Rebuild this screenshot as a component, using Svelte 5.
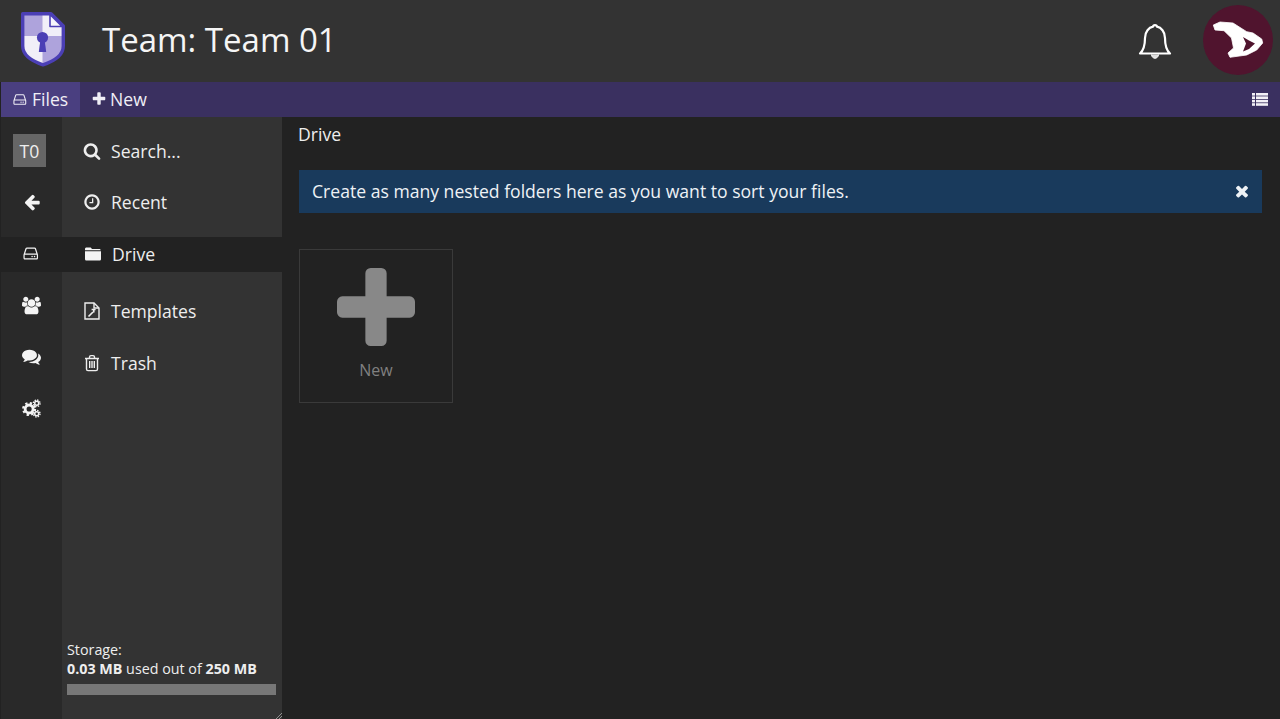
<script>
    // FontAwesome-style glyph paths on a 1792 grid
    const icons = {
        search: "M1216 832q0-185-131.5-316.5t-316.5-131.5-316.5 131.5-131.5 316.5 131.5 316.5 316.5 131.5 316.5-131.5 131.5-316.5zm512 832q0 52-38 90t-90 38q-54 0-90-38l-343-342q-179 124-399 124-143 0-273.5-55.5t-225-150-150-225-55.5-273.5 55.5-273.5 150-225 225-150 273.5-55.5 273.5 55.5 225 150 150 225 55.5 273.5q0 220-124 399l343 343q37 37 37 90z",
        clock: "M1024 544v448q0 14-9 23t-23 9h-320q-14 0-23-9t-9-23v-64q0-14 9-23t23-9h224v-352q0-14 9-23t23-9h64q14 0 23 9t9 23zm416 352q0-148-73-273t-198-198-273-73-273 73-198 198-73 273 73 273 198 198 273 73 273-73 198-198 73-273zm224 0q0 209-103 385.5t-279.5 279.5-385.5 103-385.5-103-279.5-279.5-103-385.5 103-385.5 279.5-279.5 385.5-103 385.5 103 279.5 279.5 103 385.5z",
        hdd: "M1040 1216q0 33-23.5 56.5t-56.5 23.5-56.5-23.5-23.5-56.5 23.5-56.5 56.5-23.5 56.5 23.5 23.5 56.5zm256 0q0 33-23.5 56.5t-56.5 23.5-56.5-23.5-23.5-56.5 23.5-56.5 56.5-23.5 56.5 23.5 23.5 56.5zm160 160v-320q0-13-9.5-22.5t-22.5-9.5h-1216q-13 0-22.5 9.5t-9.5 22.5v320q0 13 9.5 22.5t22.5 9.5h1216q13 0 22.5-9.5t9.5-22.5zm-1230-480h1180l-157-482q-4-13-16-21.5t-26-8.5h-782q-14 0-26 8.5t-16 21.5zm1358 160v320q0 66-47 113t-113 47h-1216q-66 0-113-47t-47-113v-320q0-25 16-75l197-606q17-53 63-86t101-33h782q55 0 101 33t63 86l197 606q16 50 16 75z",
        plus: "M1600 736v192q0 40-28 68t-68 28h-416v416q0 40-28 68t-68 28h-192q-40 0-68-28t-28-68v-416h-416q-40 0-68-28t-28-68v-192q0-40 28-68t68-28h416v-416q0-40 28-68t68-28h192q40 0 68 28t28 68v416h416q40 0 68 28t28 68z",
        times: "M1490 1322q0 40-28 68l-136 136q-28 28-68 28t-68-28l-294-294-294 294q-28 28-68 28t-68-28l-136-136q-28-28-28-68t28-68l294-294-294-294q-28-28-28-68t28-68l136-136q28-28 68-28t68 28l294 294 294-294q28-28 68-28t68 28l136 136q28 28 28 68t-28 68l-294 294 294 294q28 28 28 68z",
        arrow: "M1664 896v128q0 53-32.5 90.5t-84.5 37.5h-704l293 294q38 36 38 90t-38 90l-75 76q-37 37-90 37-52 0-91-37l-651-652q-37-37-37-90 0-52 37-91l651-650q38-38 91-38 52 0 90 38l75 74q38 38 38 91t-38 91l-293 293h704q52 0 84.5 37.5t32.5 90.5z",
        users: "M593 896q-162 5-265 128h-134q-82 0-138-40.5t-56-118.5q0-353 124-353 6 0 43.5 21t97.5 42.5 119 21.5q67 0 133-23-5 37-5 66 0 139 81 256zm1071 637q0 120-73 189.5t-194 69.5h-874q-121 0-194-69.5t-73-189.5q0-53 3.5-103.5t14-109 26.5-108.5 43-97.5 62-81 85.5-53.5 111.5-20q10 0 43 21.5t73 48 107 48 135 21.5 135-21.5 107-48 73-48 43-21.5q61 0 111.5 20t85.5 53.5 62 81 43 97.5 26.5 108.5 14 109 3.5 103.5zm-1024-1277q0 106-75 181t-181 75-181-75-75-181 75-181 181-75 181 75 75 181zm704 384q0 159-112.5 271.5t-271.5 112.5-271.5-112.5-112.5-271.5 112.5-271.5 271.5-112.5 271.5 112.5 112.5 271.5zm576 225q0 78-56 118.5t-138 40.5h-134q-103-123-265-128 81-117 81-256 0-29-5-66 66 23 133 23 59 0 119-21.5t97.5-42.5 43.5-21q124 0 124 353zm-128-609q0 106-75 181t-181 75-181-75-75-181 75-181 181-75 181 75 75 181z",
        comments: "M1408 768q0 139-94 257t-256.5 186.5-353.5 68.5q-86 0-176-16-124 88-278 128-36 9-86 16h-3q-11 0-20.5-8t-11.5-21q-1-3-1-6.5t.5-6.5 2-6l2.5-5 3.5-5.5 4-5 4.5-5 4-4.5q5-6 23-25t26-29.5 22.5-29 25-38.5 20.5-44q-124-72-195-177t-71-224q0-139 94-257t256.5-186.5 353.5-68.5 353.5 68.5 256.5 186.5 94 257zm384 256q0 120-71 224.5t-195 176.5q10 24 20.5 44t25 38.5 22.5 29 26 29.5 23 25q1 1 4 4.5t4.5 5 4 5 3.5 5.5l2.5 5 2 6 .5 6.5-1 6.5q-3 14-13 22t-22 7q-50-7-86-16-154-40-278-128-90 16-176 16-271 0-472-132 58 4 88 4 161 0 309-45t264-129q125-92 192-212t67-254q0-77-23-152 129 71 204 178t75 230z"
    }

    const rail = [
        { icon: "arrow", size: 18 },
        { icon: "hdd", size: 17, active: true },
        { icon: "users", size: 19 },
        { icon: "comments", size: 19 },
        { icon: "cogs" }
    ]
</script>

{#snippet fa(name, size)}
    <svg class="fa" width={size} height={size} viewBox={name === "users" ? "0 0 1920 1792" : "0 0 1792 1792"} fill="currentColor"><path d={icons[name]} /></svg>
{/snippet}

<div class="app">
    <header class="top">
        <svg class="logo" width="46" height="56" viewBox="0 0 46 56">
            <path d="M2.7 2.7H31L43.3 15V35C43.3 45 33 50.5 23 53.8C13 50.5 2.7 45 2.7 35Z" fill="#f1eff8" />
            <path d="M3 3H22.5V25H3Z" fill="#aea3dc" />
            <path d="M22.5 25H43V36C43 44 33 49 22.5 53Z" fill="#aea3dc" />
            <path d="M2.7 2.7H31L43.3 15V35C43.3 45 33 50.5 23 53.8C13 50.5 2.7 45 2.7 35Z" fill="none" stroke="#4b3fb5" stroke-width="3.4" stroke-linejoin="round" />
            <path d="M30 3.5L42 15.5H30Z" fill="#f6f5fb" stroke="#4b3fb5" stroke-width="1.6" stroke-linejoin="round" />
            <circle cx="22.5" cy="26.5" r="5.6" fill="#4b3fb5" />
            <path d="M20.5 28H24.5L26.2 41H18.8Z" fill="#4b3fb5" />
        </svg>
        <h1>Team: Team 01</h1>
        <svg class="bell" width="34" height="38" viewBox="0 0 34 38" fill="none" stroke="#fff" stroke-width="2.2" stroke-linejoin="round">
            <path d="M2 30.5C6 27 7 22 7 15C7 8.5 11 4.5 15 3.7C15.2 1.5 18.8 1.5 19 3.7C23 4.5 27 8.5 27 15C27 22 28 27 32 30.5Z" />
            <path d="M13.5 31.5C13.8 36.5 20.2 36.5 20.5 31.5" fill="#ddd" stroke-width="1" />
        </svg>
        <div class="avatar">
            <svg width="70" height="70" viewBox="0 0 70 70">
                <path d="M10.3 20L17 17L30 18L43.7 26.7L50 28L58.7 34L59.7 38L53.7 45L43.7 50L27 52.3L25 48L30.5 43L28.5 33L21 25.7L12 25Z" fill="#fff" stroke="#fff" stroke-width="0.8" stroke-linejoin="round" />
                <path d="M40 32L46 35.5L52 38.5L46 44L40 46.5L43 38.5Z" fill="#50142e" />
            </svg>
        </div>
    </header>

    <nav class="toolbar">
        <div class="tab current">{@render fa("hdd", 15)}<span>Files</span></div>
        <div class="tab">{@render fa("plus", 16)}<span>New</span></div>
        <svg class="listview" width="16" height="13" viewBox="0 0 16 13" fill="#f2f0f6">
            <rect x="0" y="0" width="3" height="2.6" /><rect x="4" y="0" width="12" height="2.6" />
            <rect x="0" y="3.4" width="3" height="2.6" /><rect x="4" y="3.4" width="12" height="2.6" />
            <rect x="0" y="6.8" width="3" height="2.6" /><rect x="4" y="6.8" width="12" height="2.6" />
            <rect x="0" y="10.2" width="3" height="2.6" /><rect x="4" y="10.2" width="12" height="2.6" />
        </svg>
    </nav>

    <div class="body">
        <aside class="sidebar">
            <div class="rail">
                <div class="team"><span>T0</span></div>
                {#each rail as item}
                    <div class="railitem" class:active={item.active}>
                        {#if item.icon === "cogs"}
                            <svg width="19" height="19" viewBox="0 0 20 20" fill="none" stroke="#f4f4f4">
                                <circle cx="7.5" cy="10.5" r="4.2" stroke-width="3" />
                                <circle cx="7.5" cy="10.5" r="6.2" stroke-width="2.4" stroke-dasharray="2.4 2.47" />
                                <circle cx="15.5" cy="4.5" r="2.1" stroke-width="1.6" />
                                <circle cx="15.5" cy="4.5" r="3.5" stroke-width="1.4" stroke-dasharray="1.5 1.25" />
                                <circle cx="15.5" cy="15.5" r="2.1" stroke-width="1.6" />
                                <circle cx="15.5" cy="15.5" r="3.5" stroke-width="1.4" stroke-dasharray="1.5 1.25" />
                            </svg>
                        {:else}
                            {@render fa(item.icon, item.size)}
                        {/if}
                    </div>
                {/each}
            </div>
            <div class="tree">
                <div class="row first">{@render fa("search", 18)}<span>Search...</span></div>
                <div class="row">{@render fa("clock", 18)}<span>Recent</span></div>
                <div class="row drive">
                    <svg class="fa" width="18" height="14" viewBox="0 0 18 14" fill="#f4f4f4">
                        <path d="M1 3.2V2C1 1 1.7.5 2.5.5H6C7 .5 7.5 1 7.8 2H15C16 2 16.6 2.4 16.8 3.2Z" />
                        <path d="M1 4.2H17V12C17 13 16.3 13.6 15.4 13.6H2.6C1.7 13.6 1 13 1 12Z" />
                    </svg>
                    <span>Drive</span>
                </div>
                <div class="row templates">
                    <svg class="fa" width="18" height="18" viewBox="0 0 18 18" fill="none" stroke="#eee" stroke-width="1.4">
                        <path d="M2 1H11L16 6V17H2Z" />
                        <path d="M11 1V6H16" />
                        <path d="M5.5 14.5L10 10M8.6 7.5H12.6M10.8 7.5V10.5" stroke-width="1.6" />
                    </svg>
                    <span>Templates</span>
                </div>
                <div class="row">
                    <svg class="fa" width="18" height="18" viewBox="0 0 18 18" fill="none" stroke="#eee" stroke-width="1.4">
                        <path d="M2 4.5H16M6.5 4.5V3C6.5 2 7 1.6 8 1.6H10C11 1.6 11.5 2 11.5 3V4.5" />
                        <path d="M3.5 4.5V15C3.5 16 4.1 16.6 5 16.6H13C13.9 16.6 14.5 16 14.5 15V4.5" />
                        <path d="M6.7 7V14M9 7V14M11.3 7V14" />
                    </svg>
                    <span>Trash</span>
                </div>
                <div class="storage">
                    <div>Storage:</div>
                    <div><b>0.03 MB</b> used out of <b>250 MB</b></div>
                    <div class="bar"></div>
                </div>
                <svg class="grip" width="6" height="6" viewBox="0 0 6 6" stroke="#aaa" stroke-width="0.8"><path d="M0 6L6 0M3 6L6 3" /></svg>
            </div>
        </aside>

        <main class="content">
            <div class="path">Drive</div>
            <div class="info">
                <span>Create as many nested folders here as you want to sort your files.</span>
                {@render fa("times", 18)}
            </div>
            <div class="grid">
                <div class="tile">
                    <svg width="78" height="78" viewBox="192 128 1408 1408" fill="#888" class="bigplus"><path d={icons.plus} /></svg>
                    <span>New</span>
                </div>
            </div>
        </main>
    </div>
</div>

<style>
    :global(body) {
        background: #222;
    }
    .app {
        display: flex;
        flex-direction: column;
        height: 719px;
        overflow: hidden;
        font-family: "Open Sans", sans-serif;
        color: #eee;
        background: #222;
    }
    .fa {
        display: block;
        flex: none;
    }
    .top {
        display: flex;
        align-items: center;
        height: 82px;
        flex: none;
        background: #333;
        padding: 0 7px 2px 20px;
        box-sizing: border-box;
    }
    .logo {
        flex: none;
        margin-top: -2px;
    }
    h1 {
        margin: -2px 0 0 36px;
        font-size: 33px;
        font-weight: 400;
        color: #f5f5f5;
        flex: 1;
    }
    .bell {
        margin-right: 31px;
        margin-top: 3px;
    }
    .avatar {
        width: 70px;
        height: 70px;
        border-radius: 50%;
        background: #50142e;
        overflow: hidden;
    }
    .avatar svg {
        display: block;
    }
    .toolbar {
        display: flex;
        align-items: center;
        height: 35px;
        flex: none;
        margin-left: 1px;
        background: #3a3060;
        padding-right: 12px;
    }
    .tab {
        display: flex;
        align-items: center;
        gap: 4px;
        height: 100%;
        padding: 0 11px 1px;
        box-sizing: border-box;
        font-size: 17.6px;
        color: #f0eef6;
    }
    .tab.current {
        background: #4a3f80;
        width: 79px;
        padding: 0 11px 1px 12px;
    }
    .tab:not(.current) {
        gap: 3px;
    }
    .listview {
        margin-left: auto;
    }
    .body {
        display: flex;
        flex: 1;
        min-height: 0;
    }
    .sidebar {
        display: flex;
        flex: none;
        margin-left: 1px;
        width: 281px;
    }
    .rail {
        width: 61px;
        flex: none;
        background: #292929;
        padding-top: 17px;
        box-sizing: border-box;
        display: flex;
        flex-direction: column;
        color: #f4f4f4;
    }
    .team {
        width: 33px;
        height: 33px;
        margin: 0 0 18px 12px;
        background: #666;
        color: #eee;
        font-size: 17.6px;
        display: flex;
        align-items: center;
        justify-content: center;
    }
    .railitem {
        height: 35px;
        margin-bottom: 16.5px;
        padding-bottom: 1px;
        box-sizing: border-box;
        display: flex;
        align-items: center;
        justify-content: center;
    }
    .railitem.active {
        background: #222;
    }
    .tree {
        flex: 1;
        background: #333;
        display: flex;
        flex-direction: column;
        position: relative;
    }
    .row {
        display: flex;
        align-items: center;
        gap: 10px;
        height: 35px;
        margin-bottom: 17px;
        padding-left: 21px;
        font-size: 17.6px;
        color: #eee;
    }
    .row.first {
        margin-top: 16px;
        margin-bottom: 16px;
    }
    .row.drive {
        background: #222;
        margin-top: 1px;
        margin-bottom: 21px;
        padding: 0 0 1px 22px;
        box-sizing: border-box;
    }
    .storage {
        margin-top: auto;
        padding: 0 6px 24px 5px;
        font-size: 14.3px;
        line-height: 19px;
        color: #eee;
    }
    .bar {
        height: 11px;
        background: #777;
        margin-top: 6px;
    }
    .grip {
        position: absolute;
        right: 0;
        bottom: 0;
    }
    .content {
        flex: 1;
        min-width: 0;
        padding: 5px 18px 0 16px;
    }
    .path {
        font-size: 17.6px;
        line-height: 24px;
    }
    .info {
        display: flex;
        align-items: center;
        justify-content: space-between;
        height: 43px;
        margin: 24px 0 36px 1px;
        padding: 0 11px 1px 13px;
        box-sizing: border-box;
        background: #193a5c;
        font-size: 17.6px;
        color: #eef2f6;
    }
    .grid {
        display: flex;
        margin-left: 1px;
    }
    .tile {
        width: 154px;
        height: 154px;
        box-sizing: border-box;
        border: 1px solid #3a3a3a;
        display: flex;
        flex-direction: column;
        align-items: center;
        padding-top: 18px;
        font-size: 16px;
        color: #808080;
    }
    .bigplus {
        display: block;
        margin-bottom: 13px;
    }
</style>
